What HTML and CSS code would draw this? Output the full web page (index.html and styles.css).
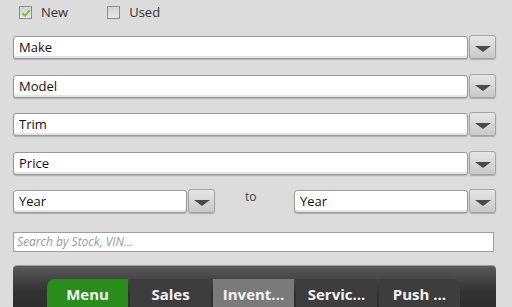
FILE: index.html
```html
<!DOCTYPE html>
<html>
<head>
<meta charset="utf-8">
<link rel="stylesheet" href="styles.css">
</head>
<body>
<div class="page">
  <div class="checks">
    <label class="check"><span class="box checked"><svg width="10" height="10" viewBox="0 0 10 10"><path d="M1.5 5.2 L4 7.8 L8.8 2" fill="none" stroke="#7cc242" stroke-width="2"/></svg></span><span class="lbl">New</span></label>
    <label class="check used"><span class="box"></span><span class="lbl">Used</span></label>
  </div>
  <div class="sel"><div class="field">Make</div><div class="btn"><span class="tri"></span></div></div>
  <div class="sel"><div class="field">Model</div><div class="btn"><span class="tri"></span></div></div>
  <div class="sel"><div class="field">Trim</div><div class="btn"><span class="tri"></span></div></div>
  <div class="sel"><div class="field">Price</div><div class="btn"><span class="tri"></span></div></div>
  <div class="yearrow">
    <div class="sel half"><div class="field">Year</div><div class="btn"><span class="tri"></span></div></div>
    <div class="to">to</div>
    <div class="sel half"><div class="field">Year</div><div class="btn"><span class="tri"></span></div></div>
  </div>
  <div class="search">Search by Stock, VIN...</div>
  <div class="bar">
    <div class="tabs">
      <div class="tab green">Menu</div>
      <div class="tab">Sales</div>
      <div class="tab active">Invent...</div>
      <div class="tab">Servic...</div>
      <div class="tab last">Push ...</div>
    </div>
  </div>
</div>
</body>
</html>
```
FILE: styles.css
```css
html, body {
  margin: 0;
  padding: 0;
  background: #dcdcdc;
  font-family: "Open Sans", "DejaVu Sans", sans-serif;
  overflow: hidden;
}
.page {
  width: 512px;
  height: 307px;
  display: flex;
  flex-direction: column;
}
.page > * { flex: none; }
.checks {
  display: flex;
  height: 24px;
  padding-left: 19px;
  padding-top: 6px;
  box-sizing: border-box;
}
.check {
  display: flex;
  align-items: flex-start;
  font-size: 13px;
  color: #333;
}
.used { margin-left: 39px; }
.box {
  width: 11px;
  height: 11px;
  border: 1px solid #8c8c8c;
  background: linear-gradient(#d4d4d4, #e6e6e6);
  display: flex;
  align-items: center;
  justify-content: center;
}
.lbl {
  margin-left: 9px;
  line-height: 14px;
  margin-top: -1px;
}
.sel {
  display: flex;
  margin-left: 13px;
  width: 483px;
  height: 24px;
  margin-top: 11px;
  flex: none;
}
.sel + .sel { margin-top: 14.5px; }
.field {
  flex: 1;
  background: #fff;
  border: 1px solid #9a9a9a;
  border-radius: 3px;
  box-shadow: inset 0 -2px 0 #e4e4e4, 0 1px 1px #b0b0b0;
  font-size: 13px;
  color: #111;
  line-height: 21px;
  padding-left: 5px;
  box-sizing: border-box;
  height: 23px;
  margin-top: 1px;
}
.btn {
  width: 27px;
  margin-left: 1px;
  box-sizing: border-box;
  border: 1px solid #a4a4a4;
  border-radius: 3px;
  background: linear-gradient(#e6e6e6, #c9c9c9);
  box-shadow: 0 1px 1px #aaa;
  display: flex;
  align-items: center;
  justify-content: center;
}
.tri {
  width: 0;
  height: 0;
  border-left: 8px solid transparent;
  border-right: 8px solid transparent;
  border-top: 6px solid #4a4a4a;
  margin-top: 4px;
}
.yearrow {
  display: flex;
  margin-top: 14.5px;
  align-items: flex-start;
}
.yearrow .sel { margin-top: 0; }
.sel.half { width: 202px; }
.yearrow .to + .sel.half { margin-left: 0; }
.to {
  width: 79px;
  flex: none;
  font-size: 12px;
  color: #444;
  line-height: 14px;
  margin-top: 1px;
  padding-left: 30px;
  box-sizing: border-box;
}
.search {
  margin-left: 13px;
  margin-top: 19px;
  width: 481px;
  height: 20px;
  box-sizing: border-box;
  background: #fff;
  border: 1px solid #9f9f9f;
  font-size: 12px;
  font-style: italic;
  color: #9a9a9a;
  line-height: 18px;
  padding-left: 3px;
}
.page > .bar {
  margin-left: 13px;
  margin-top: 14px;
  width: 483px;
  flex: 1;
  min-height: 0;
  border-radius: 4px 4px 0 0;
  background: linear-gradient(#5a5a5a, #333 60%, #2e2e2e);
  box-shadow: 0 -1px 0 #999;
  padding-top: 13px;
  padding-left: 34px;
  box-sizing: border-box;
}
.tabs {
  display: flex;
  gap: 2px;
  height: 100%;
}
.tab {
  width: 81px;
  background: #3d3d3d;
  color: #f2f2f2;
  font-weight: bold;
  font-size: 15px;
  text-align: center;
  line-height: 30px;
  flex: none;
}
.tab.green {
  background: #2a8c1c;
  border-radius: 8px 0 0 0;
}
.tab.active { background: #7a7a7a; }
.tab.last { border-radius: 0 8px 0 0; }
```
